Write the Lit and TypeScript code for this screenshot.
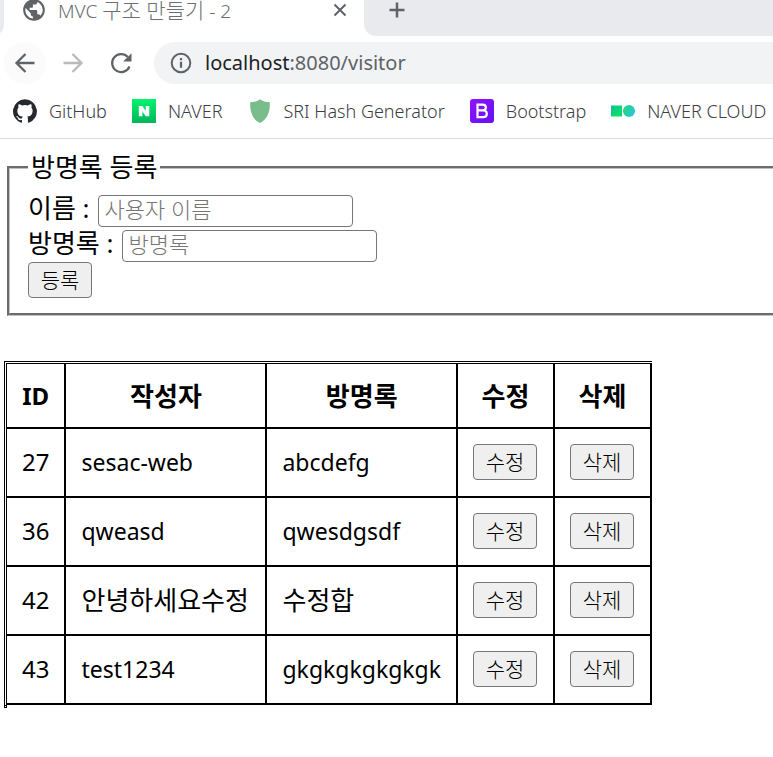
import { LitElement, html, css, svg } from "lit";
import { customElement, state } from "lit/decorators.js";

interface Visitor {
  id: number;
  name: string;
  comment: string;
}

const icons = {
  globe: svg`<path fill="#5f6368" d="M12 2C6.48 2 2 6.48 2 12s4.48 10 10 10 10-4.48 10-10S17.52 2 12 2zm-1 17.93c-3.95-.49-7-3.85-7-7.93 0-.62.08-1.21.21-1.79L9 15v1c0 1.1.9 2 2 2v1.93zm6.9-2.54c-.26-.81-1-1.39-1.9-1.39h-1v-3c0-.55-.45-1-1-1H8v-2h2c.55 0 1-.45 1-1V7h2c1.1 0 2-.9 2-2v-.41c2.93 1.19 5 4.06 5 7.41 0 2.08-.8 3.97-2.1 5.39z"/>`,
  close: svg`<path d="M6.500 6.500l11 11M17.500 6.500l-11 11" stroke="#5f6368" stroke-width="2"/>`,
  plus: svg`<path d="M12 3v18M3 12h18" stroke="#5f6368" stroke-width="3"/>`,
  back: svg`<path d="M21.500 12H3.500M12.500 3L3.500 12l9 9" fill="none" stroke="#5f6368" stroke-width="2.300"/>`,
  forward: svg`<path d="M2.500 12h18M11.500 3l9 9-9 9" fill="none" stroke="#bababc" stroke-width="2.300"/>`,
  reload: svg`<path d="M20.500 15.500A9 9 0 1 1 18.700 5.900" fill="none" stroke="#5f6368" stroke-width="2.200"/><path d="M22.500 2.200v8.300h-8.300z" fill="#5f6368"/>`,
  info: svg`<circle cx="12" cy="12" r="9.300" fill="none" stroke="#5f6368" stroke-width="2"/><path d="M12 10.800v6M12 7v2.200" stroke="#5f6368" stroke-width="2.200"/>`,
  github: svg`<path fill="#24292f" d="M12 .3a12 12 0 0 0-3.800 23.380c.6.120.830-.260.830-.570L9 21.070c-3.340.720-4.040-1.610-4.040-1.610-.550-1.390-1.340-1.760-1.340-1.760-1.080-.740.090-.730.090-.730 1.200.090 1.830 1.240 1.830 1.240 1.080 1.830 2.810 1.300 3.500 1 .1-.780.420-1.310.760-1.610-2.670-.3-5.470-1.330-5.470-5.930 0-1.310.470-2.380 1.240-3.220-.140-.3-.540-1.520.1-3.180 0 0 1-.320 3.300 1.230a11.500 11.500 0 0 1 6 0c2.280-1.550 3.290-1.230 3.290-1.230.640 1.660.240 2.880.120 3.180a4.650 4.650 0 0 1 1.230 3.220c0 4.610-2.800 5.630-5.480 5.920.420.360.810 1.100.810 2.220l-.010 3.290c0 .310.2.690.820.570A12 12 0 0 0 12 .3z"/>`,
  naver: svg`<defs><linearGradient id="n" x2="0" y2="1"><stop stop-color="#03f36d"/><stop offset="1" stop-color="#03b55c"/></linearGradient></defs><path fill="url(#n)" d="M0 0h24v24H0z"/><path fill="#fff" d="M6.800 7h3.600l3.300 4.900V7h3.600v10.300h-3.500l-3.400-4.900v4.900H6.800z"/>`,
  shield: svg`<path fill="#78bd8b" d="M13 .2c2.700 2 5.700 3 9.800 3.100C23.200 13 20.500 20.500 13 24 5.500 20.500 2.800 13 3.200 3.300 7.300 3.200 10.300 2.200 13 .2z"/>`,
  bootstrap: svg`<defs><linearGradient id="b" x2="1" y2="1"><stop stop-color="#9013fe"/><stop offset="1" stop-color="#6610f2"/></linearGradient></defs><rect width="24" height="24" rx="3" fill="url(#b)"/><path fill="none" stroke="#fff" stroke-width="2.200" d="M7.500 5.700h5.200c4.200 0 4.200 5.700 0 5.700H7.500h5.700c4.800 0 4.800 6.800 0 6.800H7.500z"/>`,
  cloud: svg`<defs><linearGradient id="c" x2="1" y2="1"><stop stop-color="#19bb9c"/><stop offset=".7" stop-color="#04df69"/></linearGradient><linearGradient id="d" x2="1" y2=".6"><stop stop-color="#27d37a"/><stop offset="1" stop-color="#28c8d5"/></linearGradient></defs><path fill="url(#c)" d="M0 6.500h11v11H0z"/><circle cx="18" cy="12" r="6" fill="url(#d)"/>`,
};

const icon = (name: keyof typeof icons) =>
  html`<svg class="icon ${name}" viewBox="0 0 24 24" aria-hidden="true">${icons[name]}</svg>`;

@customElement("browser-chrome")
class BrowserChrome extends LitElement {
  static styles = css`
    :host {
      display: block;
      border-bottom: 1px solid #d9dadc;
      background: #fff;
      font-family: "Noto Sans", "Noto Sans CJK KR", sans-serif;
      color: #3c4043;
      white-space: nowrap;
    }
    .icon {
      display: block;
      width: 24px;
      height: 24px;
      flex: none;
    }
    .icon.globe {
      width: 26px;
      height: 26px;
    }
    button {
      border: 0;
      padding: 0;
      background: none;
      display: grid;
      place-items: center;
      flex: none;
    }
    .tabs {
      display: flex;
      height: 36px;
    }
    .before {
      width: 4px;
      height: 33px;
      background: #e8eaed;
      border-bottom-right-radius: 4px 10px;
    }
    .tab {
      width: 360px;
      box-sizing: border-box;
      display: flex;
      align-items: center;
      height: 20px;
      padding: 0 12px 0 17px;
      gap: 11px;
      color: #6b6e72;
      font-size: 19px;
      line-height: 18px;
    }
    .title {
      flex: 1;
      font-weight: 300;
    }
    .ko {
      font-size: 21px;
    }
    .strip {
      flex: 1;
      background: #e8eaed;
      border-bottom-left-radius: 12px;
      padding-left: 21px;
    }
    .plus {
      height: 20px;
    }
    .toolbar {
      display: flex;
      align-items: center;
      gap: 6px;
      padding: 6px 0 0 4px;
    }
    .nav {
      width: 42px;
      height: 42px;
      border-radius: 50%;
    }
    .active {
      background: #fbfbfb;
    }
    .address {
      flex: 1;
      display: flex;
      align-items: center;
      gap: 12px;
      height: 42px;
      margin-left: 6px;
      padding-left: 15px;
      border-radius: 21px 0 0 21px;
      background: #f1f3f4;
      font-size: 20px;
      color: #5f6368;
    }
    .host {
      color: #202124;
    }
    .bookmarks {
      display: flex;
      align-items: center;
      gap: 25px;
      height: 54px;
      padding-left: 13px;
      overflow: hidden;
      font-size: 18px;
      line-height: 24px;
    }
    .bookmarks a {
      display: flex;
      align-items: center;
      gap: 12px;
      color: inherit;
      text-decoration: none;
      font-weight: 300;
    }
  `;

  render() {
    return html`
      <div class="tabs">
        <div class="before"></div>
        <div class="tab">
          ${icon("globe")}
          <span class="title">MVC <span class="ko">구조 만들기</span> - 2</span>
          <button aria-label="Close tab">${icon("close")}</button>
        </div>
        <div class="strip">
          <button class="plus" aria-label="New tab">${icon("plus")}</button>
        </div>
      </div>
      <div class="toolbar">
        <button class="nav active" aria-label="Back">${icon("back")}</button>
        <button class="nav" aria-label="Forward">${icon("forward")}</button>
        <button class="nav" aria-label="Reload">${icon("reload")}</button>
        <div class="address">
          ${icon("info")}
          <span><span class="host">localhost</span>:8080/visitor</span>
        </div>
      </div>
      <nav class="bookmarks">
        <a href="#">${icon("github")}GitHub</a>
        <a href="#">${icon("naver")}NAVER</a>
        <a href="#">${icon("shield")}SRI Hash Generator</a>
        <a href="#">${icon("bootstrap")}Bootstrap</a>
        <a href="#">${icon("cloud")}NAVER CLOUD</a>
      </nav>
    `;
  }
}

@customElement("app-root")
class AppRoot extends LitElement {
  @state() private visitors: Visitor[] = [
    { id: 27, name: "sesac-web", comment: "abcdefg" },
    { id: 36, name: "qweasd", comment: "qwesdgsdf" },
    { id: 42, name: "안녕하세요수정", comment: "수정합" },
    { id: 43, name: "test1234", comment: "gkgkgkgkgkgk" },
  ];

  static styles = css`
    :host {
      display: block;
      min-height: 100vh;
      overflow: hidden;
      background: #fff;
      color: #000;
      font-family: "Noto Sans", "Noto Sans CJK KR", sans-serif;
      font-size: 24px;
      line-height: 32px;
    }
    main {
      padding-top: 12px;
    }
    .ko {
      font-size: 26px;
    }
    fieldset {
      margin: 0 0 45px 7px;
      padding: 12px 0 15px 18px;
      border: 3px groove #c0c0c0;
      border-right: 0;
    }
    legend {
      padding: 0 3px;
    }
    .field {
      display: flex;
      align-items: flex-start;
      gap: 8px;
      height: 32px;
      line-height: 26px;
    }
    .field + .field {
      margin-top: 3px;
    }
    input {
      box-sizing: border-box;
      width: 255px;
      height: 32px;
      padding: 0 6px 4px;
      border: 1px solid #767676;
      border-radius: 4px;
      font: inherit;
      font-size: 22px;
    }
    input::placeholder {
      color: #757575;
      font-weight: 300;
    }
    button {
      display: block;
      box-sizing: border-box;
      width: 64px;
      height: 36px;
      padding: 0;
      border: 1px solid #767676;
      border-radius: 4px;
      background: #efefef;
      color: #000;
      font-family: inherit;
      font-size: 21px;
      font-weight: 300;
      line-height: 32px;
    }
    table {
      position: relative;
      margin-left: 4px;
      border-spacing: 0;
      border-top: 3px double #000;
      border-left: 3px double #000;
    }
    table::after {
      content: "";
      position: absolute;
      left: -3px;
      top: 100%;
      width: 1px;
      height: 1px;
      border: 1px solid #000;
    }
    th,
    td {
      box-sizing: border-box;
      padding: 0 15px;
      border-right: 2px solid #000;
      border-bottom: 2px solid #000;
      text-align: left;
    }
    th {
      height: 65px;
      text-align: center;
    }
    td {
      height: 69px;
      padding-bottom: 1px;
    }
    .latin {
      font-size: 23px;
    }
    .id {
      width: 59px;
    }
    .name {
      width: 201px;
    }
    .comment {
      width: 190px;
    }
    .action {
      width: 97px;
    }
  `;

  private textClass(text: string) {
    return /[가-힣]/.test(text) ? "ko" : "latin";
  }

  render() {
    return html`
      <browser-chrome></browser-chrome>
      <main>
        <form @submit=${(e: Event) => e.preventDefault()}>
          <fieldset>
            <legend class="ko">방명록 등록</legend>
            <div class="field">
              <label class="ko" for="name">이름 :</label>
              <input id="name" placeholder="사용자 이름" />
            </div>
            <div class="field">
              <label class="ko" for="comment">방명록 :</label>
              <input id="comment" placeholder="방명록" />
            </div>
            <button>등록</button>
          </fieldset>
        </form>
        <table>
          <thead>
            <tr>
              <th class="id">ID</th>
              <th class="name ko">작성자</th>
              <th class="comment ko">방명록</th>
              <th class="action ko">수정</th>
              <th class="action ko">삭제</th>
            </tr>
          </thead>
          <tbody>
            ${this.visitors.map(
              (v) => html`<tr>
                <td>${v.id}</td>
                <td class=${this.textClass(v.name)}>${v.name}</td>
                <td class=${this.textClass(v.comment)}>${v.comment}</td>
                <td><button>수정</button></td>
                <td><button>삭제</button></td>
              </tr>`
            )}
          </tbody>
        </table>
      </main>
    `;
  }
}
